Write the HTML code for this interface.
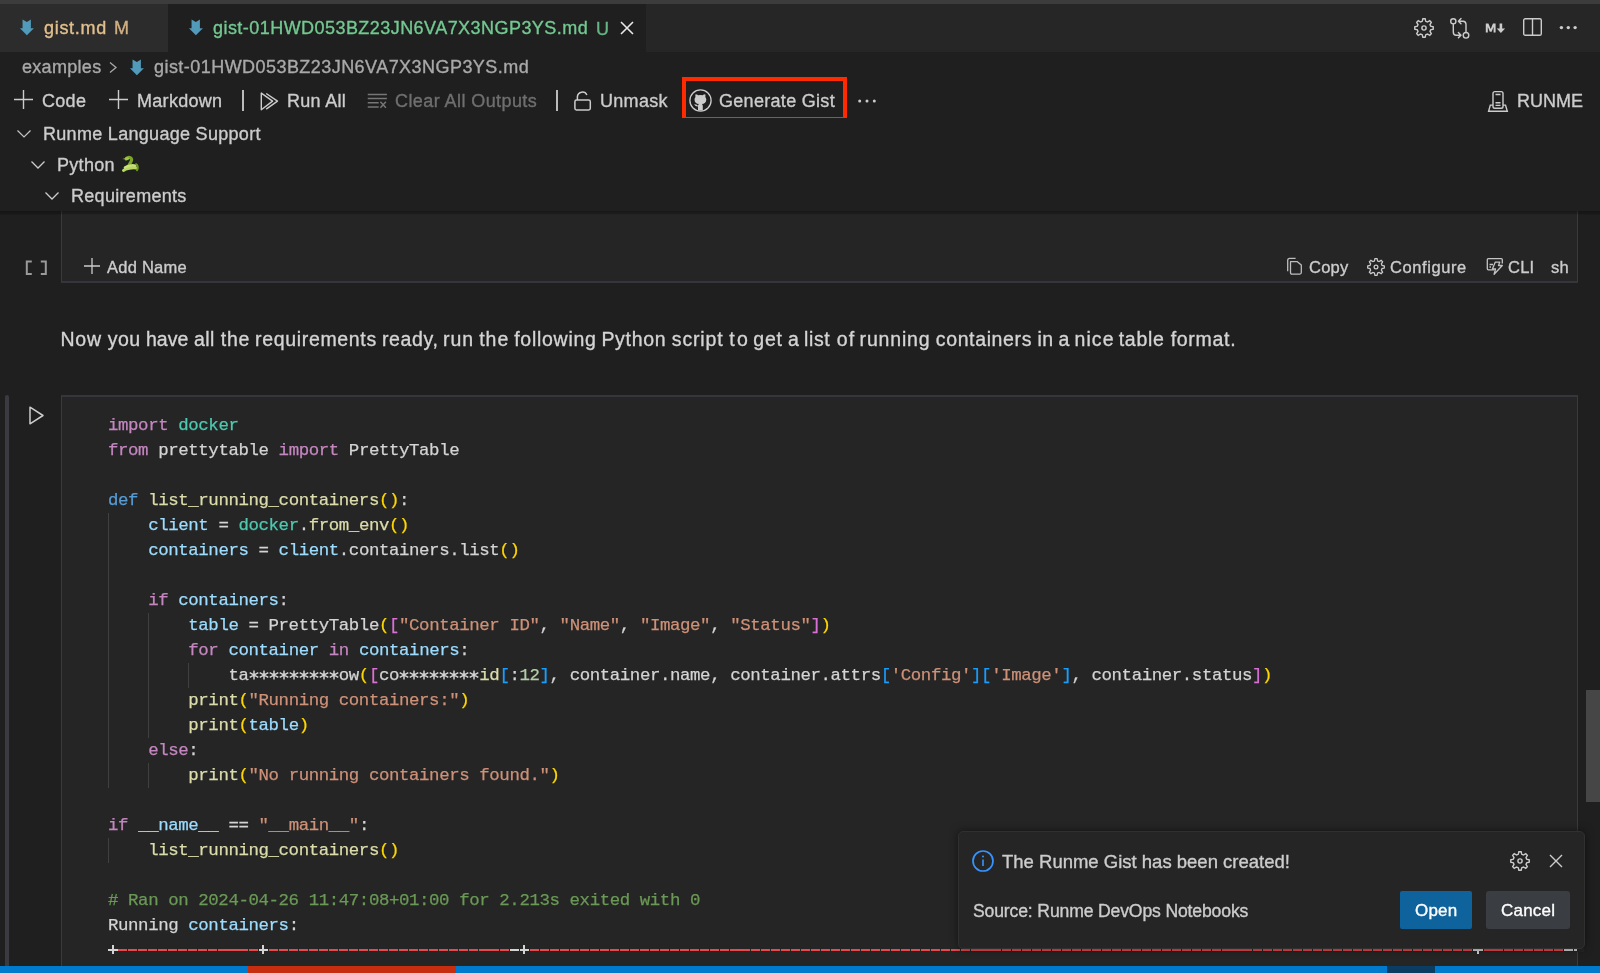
<!DOCTYPE html>
<html><head><meta charset="utf-8">
<style>
*{margin:0;padding:0;box-sizing:border-box}
html,body{width:1600px;height:973px;overflow:hidden;background:#1f1f1f;font-family:"Liberation Sans",sans-serif;color:#cccccc;position:relative;-webkit-text-stroke:0.35px currentColor}
.a{position:absolute;white-space:pre}
svg.a{overflow:visible}
.ui{font-size:18px;line-height:20px;letter-spacing:0.3px}
.code{font-family:"Liberation Mono",monospace;font-size:17.4px;letter-spacing:-0.402px;line-height:25px;color:#d4d4d4;-webkit-text-stroke:0.25px currentColor}
.kw{color:#c586c0}.def{color:#569cd6}.fn{color:#dcdcaa}.var{color:#9cdcfe}.str{color:#ce9178}
.mod{color:#4ec9b0}.num{color:#b5cea8}.cm{color:#6a9955}.b1{color:#ffd700}.b2{color:#da70d6}.b3{color:#179fff}.wt{color:#d4d4d4}
.red{color:#e04b4b}
.ast i{font-style:normal}
.guide{width:1px;background:#404040}
#wrap{position:absolute;left:0;top:0;width:1600px;height:973px;will-change:transform}
</style></head><body><div id="wrap">
<!-- title strip + tabs -->
<div class="a" style="left:0;top:0;width:1600px;height:4px;background:#3c3c3c"></div>
<div class="a" style="left:0;top:4px;width:1600px;height:48px;background:#262626"></div>
<div class="a" style="left:0;top:4px;width:168px;height:48px;background:#2c2c2c"></div>
<div class="a" style="left:168px;top:4px;width:478px;height:48px;background:#1f1f1f"></div>

<!-- md icon tab1 -->
<svg class="a" style="left:19px;top:18px" width="16" height="18" viewBox="0 0 16 18"><path d="M3.56 1.6L7.86 3.9 11.9 1.6V10.2H14.9L7.86 17.2 0.96 10.2H3.56Z" fill="#519aba"/></svg>
<div class="a ui" style="left:44px;top:18px;color:#e2c08d;letter-spacing:0.7px">gist.md</div>
<div class="a ui" style="left:114px;top:18px;color:#cfb084">M</div>

<svg class="a" style="left:187.7px;top:18px" width="16" height="18" viewBox="0 0 16 18"><path d="M3.56 1.6L7.86 3.9 11.9 1.6V10.2H14.9L7.86 17.2 0.96 10.2H3.56Z" fill="#519aba"/></svg>
<div class="a ui" style="left:213px;top:18px;color:#73c991;letter-spacing:0.45px">gist-01HWD053BZ23JN6VA7X3NGP3YS.md</div>
<div class="a ui" style="left:596px;top:18.5px;color:#66b585">U</div>
<svg class="a" style="left:620px;top:21px" width="14" height="14" viewBox="0 0 14 14"><path d="M1 1L13 13M13 1L1 13" stroke="#e8e8e8" stroke-width="1.6"/></svg>

<!-- right tab actions -->
<svg class="a" style="left:1414px;top:18px" width="20" height="20" viewBox="0 0 20 20"><g fill="none" stroke="#cccccc" stroke-width="1.4"><path d="M8.21 3.34 L8.87 0.77 L11.13 0.77 L11.79 3.34 L13.45 4.02 L15.73 2.67 L17.33 4.27 L15.98 6.55 L16.66 8.21 L19.23 8.87 L19.23 11.13 L16.66 11.79 L15.98 13.45 L17.33 15.73 L15.73 17.33 L13.45 15.98 L11.79 16.66 L11.13 19.23 L8.87 19.23 L8.21 16.66 L6.55 15.98 L4.27 17.33 L2.67 15.73 L4.02 13.45 L3.34 11.79 L0.77 11.13 L0.77 8.87 L3.34 8.21 L4.02 6.55 L2.67 4.27 L4.27 2.67 L6.55 4.02Z"/><circle cx="10" cy="10" r="2.1"/></g></svg>
<svg class="a" style="left:1449px;top:17px" width="22" height="23" viewBox="0 0 22 23"><g fill="none" stroke="#cccccc" stroke-width="1.4" stroke-linecap="round" stroke-linejoin="round"><circle cx="4.3" cy="4.3" r="2.6"/><circle cx="17" cy="18.3" r="2.8"/><path d="M4.3 6.9v8.1c0 2 1 3.2 3 3.2h3.8M9.4 15.6l2.6 2.6-2.6 2.6"/><path d="M17 15.5V7.4c0-2-1-3.2-3-3.2h-3.6M12 1.6L9.4 4.2l2.6 2.6"/></g></svg>
<svg class="a" style="left:1485px;top:23px" width="21" height="10" viewBox="0 0 21 10"><path d="M0.8 9.6V0.4h2.6l2.3 5.6 2.3-5.6h2.6v9.2H8.6V3.8L6.6 8.7H4.8L2.8 3.8v5.8z" fill="#cccccc"/><path d="M14.6 0.4h2.6v5h2.9l-4.2 4.6-4.2-4.6h2.9z" fill="#cccccc"/></svg>
<svg class="a" style="left:1523px;top:18px" width="19" height="18" viewBox="0 0 19 18"><g fill="none" stroke="#cccccc" stroke-width="1.4"><rect x="0.7" y="0.7" width="17.6" height="16.6" rx="1.6"/><path d="M9.5 0.7v16.6"/></g></svg>
<svg class="a" style="left:1559px;top:25px" width="19" height="5" viewBox="0 0 19 5"><g fill="#cccccc"><circle cx="2.4" cy="2.6" r="1.7"/><circle cx="9.3" cy="2.6" r="1.7"/><circle cx="16.1" cy="2.6" r="1.7"/></g></svg>

<!-- breadcrumbs -->
<div class="a" style="left:22px;top:57px;font-size:18px;line-height:20px;letter-spacing:0.3px;color:#a9a9a9">examples</div>
<svg class="a" style="left:109px;top:62px" width="8" height="11" viewBox="0 0 8 11"><path d="M1 0.5l6 5-6 5" fill="none" stroke="#a9a9a9" stroke-width="1.3"/></svg>
<svg class="a" style="left:129.1px;top:57.9px" width="16" height="18" viewBox="0 0 16 18"><path d="M3.56 1.6L7.86 3.9 11.9 1.6V10.2H14.9L7.86 17.2 0.96 10.2H3.56Z" fill="#519aba"/></svg>
<div class="a" style="left:154px;top:57px;font-size:18px;line-height:20px;letter-spacing:0.45px;color:#a9a9a9">gist-01HWD053BZ23JN6VA7X3NGP3YS.md</div>

<!-- notebook toolbar -->
<svg class="a" style="left:14px;top:90px" width="19" height="19" viewBox="0 0 19 19"><path d="M9.5 0v19M0 9.5h19" stroke="#cccccc" stroke-width="1.4"/></svg>
<div class="a ui" style="left:42px;top:91px">Code</div>
<svg class="a" style="left:109px;top:90px" width="19" height="19" viewBox="0 0 19 19"><path d="M9.5 0v19M0 9.5h19" stroke="#cccccc" stroke-width="1.4"/></svg>
<div class="a ui" style="left:137px;top:91px">Markdown</div>
<div class="a" style="left:242px;top:90px;width:1.5px;height:21px;background:#bbbbbb"></div>
<svg class="a" style="left:259px;top:91px" width="20" height="20" viewBox="0 0 20 20"><g fill="none" stroke="#cccccc" stroke-width="1.4" stroke-linejoin="round"><path d="M2.3 2.1V18.7L13.6 10.1Z"/><path d="M7.2 2.5L18.5 10.1 7.2 18.1"/></g></svg>
<div class="a ui" style="left:287px;top:91px">Run All</div>
<svg class="a" style="left:367px;top:93px" width="21" height="16" viewBox="0 0 21 16"><g fill="none" stroke="#767676" stroke-width="1.5"><path d="M0.75 1.4H19.9M0.75 5.4H19.9M0.75 9.65H11.7M0.75 14H11.7M13.4 8.8L18.9 14.65M18.9 8.8L13.4 14.65"/></g></svg>
<div class="a ui" style="left:395px;top:91px;color:#6f6f6f;letter-spacing:0.42px">Clear All Outputs</div>
<div class="a" style="left:556px;top:90px;width:1.5px;height:21px;background:#bbbbbb"></div>
<svg class="a" style="left:573px;top:90px" width="20" height="21" viewBox="0 0 20 21"><g fill="none" stroke="#cccccc" stroke-width="1.5"><rect x="1.9" y="10.1" width="15.4" height="9.8" rx="1.6"/><path d="M4.4 10.1V6.6A5 5 0 0 1 13.9 5.0"/></g></svg>
<div class="a ui" style="left:600px;top:91px">Unmask</div>
<div class="a" style="left:682.4px;top:77.2px;width:164.8px;height:43.6px;border:4.7px solid #ff2a00"></div>
<svg class="a" style="left:689px;top:89px" width="23" height="23" viewBox="0 0 23 23"><circle cx="11.5" cy="11.5" r="10.6" fill="none" stroke="#cccccc" stroke-width="1.3"/><path d="M9 21.5v-4c-2.5 0-3.3-1.5-3.8-2.3l2 .3c.7.3 1 1 1.8 1 .3-.9.5-1.2 1-1.5-2.7-.3-4.5-1.5-4.5-4.6 0-1 .3-1.8 1-2.5-.2-.6-.3-1.6.1-2.6 1 0 1.8.5 2.6 1a8 8 0 0 1 4.4 0c.8-.5 1.6-1 2.6-1 .4 1 .3 2 .1 2.6.7.7 1 1.5 1 2.5 0 3.1-1.8 4.3-4.5 4.6.6.4 1 1.2 1 2.3v4.2z" fill="#cccccc"/></svg>
<div class="a ui" style="left:719px;top:91px">Generate Gist</div>
<svg class="a" style="left:858px;top:99px" width="18" height="4" viewBox="0 0 18 4"><g fill="#cccccc"><circle cx="1.7" cy="2" r="1.5"/><circle cx="9" cy="2" r="1.5"/><circle cx="16.3" cy="2" r="1.5"/></g></svg>
<svg class="a" style="left:1488px;top:90px" width="20" height="22" viewBox="0 0 20 22"><g fill="none" stroke="#cccccc" stroke-width="1.4"><path d="M2.3 15.1H17.5L19.3 21.3H0.6Z"/><rect x="5" y="1.6" width="10" height="16.6" rx="1.8" fill="#1f1f1f"/><path d="M7.5 4.5H12.5M7.5 12.7H12.5M7.5 15.4H12.5"/></g></svg>
<div class="a ui" style="left:1517px;top:91px;letter-spacing:0px">RUNME</div>

<!-- cell 1 (partial) -->
<div class="a" style="left:61px;top:200px;width:1517px;height:83px;background:#252525;border:1px solid #3a3a40;border-bottom:2px solid #35353b;border-top:none"></div>
<svg class="a" style="left:0;top:0" width="60" height="300"><path d="M31.8 261.5H26.8V273.9H31.8M40.8 261.5H45.8V273.9H40.8" fill="none" stroke="#9a9a9a" stroke-width="2"/></svg>
<svg class="a" style="left:84px;top:258px" width="16" height="16" viewBox="0 0 16 16"><path d="M8 0v16M0 8h16" stroke="#cccccc" stroke-width="1.3"/></svg>
<div class="a" style="left:107px;top:257px;font-size:16.5px;line-height:20px;letter-spacing:0.25px">Add Name</div>
<svg class="a" style="left:1286px;top:257px" width="18" height="19" viewBox="0 0 18 19"><g fill="none" stroke="#bdbdbd" stroke-width="1.3" stroke-linejoin="round"><path d="M1.7 14.3V3.4Q1.7 1.4 3.7 1.4H9.6"/><path d="M4.5 4.65H11.3L15.3 8.1V15.6Q15.3 17.1 13.8 17.1H6Q4.5 17.1 4.5 15.6Z"/></g></svg>
<div class="a" style="left:1309px;top:257px;font-size:16.5px;line-height:20px;letter-spacing:0.25px">Copy</div>
<svg class="a" style="left:1367px;top:258px" width="18" height="18" viewBox="0 0 20 20"><g fill="none" stroke="#cccccc" stroke-width="1.4"><path d="M8.21 3.34 L8.87 0.77 L11.13 0.77 L11.79 3.34 L13.45 4.02 L15.73 2.67 L17.33 4.27 L15.98 6.55 L16.66 8.21 L19.23 8.87 L19.23 11.13 L16.66 11.79 L15.98 13.45 L17.33 15.73 L15.73 17.33 L13.45 15.98 L11.79 16.66 L11.13 19.23 L8.87 19.23 L8.21 16.66 L6.55 15.98 L4.27 17.33 L2.67 15.73 L4.02 13.45 L3.34 11.79 L0.77 11.13 L0.77 8.87 L3.34 8.21 L4.02 6.55 L2.67 4.27 L4.27 2.67 L6.55 4.02Z"/><circle cx="10" cy="10" r="2.1"/></g></svg>
<div class="a" style="left:1390px;top:257px;font-size:16.5px;line-height:20px;letter-spacing:0.58px">Configure</div>
<svg class="a" style="left:1486px;top:257px" width="18" height="19" viewBox="0 0 18 19"><g fill="none" stroke="#c4c4c4" stroke-width="1.3" stroke-linejoin="round"><path d="M8 12.8H2.3Q1.3 12.8 1.3 11.8V2.6Q1.3 1.6 2.3 1.6H15.3Q16.3 1.6 16.3 2.6V6.5"/><path d="M3.5 7.5H7M3.5 10H5"/><path d="M9.3 5.1H13.8L12.5 8.5H16.3L8.1 17.2 9.5 12H6.4Z"/></g></svg>
<div class="a" style="left:1508px;top:257px;font-size:16.5px;line-height:20px;letter-spacing:0.25px">CLI</div>
<div class="a" style="left:1551px;top:257px;font-size:16.5px;line-height:20px;letter-spacing:0.25px">sh</div>

<!-- markdown text -->
<div class="a" style="left:60.42px;top:328px;font-size:19.5px;line-height:22px;letter-spacing:0.860px;color:#d4d4d4">Now</div><div class="a" style="left:107.68px;top:328px;font-size:19.5px;line-height:22px;letter-spacing:0.460px;color:#d4d4d4">you</div><div class="a" style="left:145.96px;top:328px;font-size:19.5px;line-height:22px;letter-spacing:0.060px;color:#d4d4d4">have</div><div class="a" style="left:193.92px;top:328px;font-size:19.5px;line-height:22px;letter-spacing:0.460px;color:#d4d4d4">all</div><div class="a" style="left:220.72px;top:328px;font-size:19.5px;line-height:22px;letter-spacing:0.780px;color:#d4d4d4">the</div><div class="a" style="left:255.00px;top:328px;font-size:19.5px;line-height:22px;letter-spacing:0.671px;color:#d4d4d4">requirements</div><div class="a" style="left:381.92px;top:328px;font-size:19.5px;line-height:22px;letter-spacing:0.636px;color:#d4d4d4">ready,</div><div class="a" style="left:442.88px;top:328px;font-size:19.5px;line-height:22px;letter-spacing:1.020px;color:#d4d4d4">run</div><div class="a" style="left:479.14px;top:328px;font-size:19.5px;line-height:22px;letter-spacing:1.020px;color:#d4d4d4">the</div><div class="a" style="left:514.22px;top:328px;font-size:19.5px;line-height:22px;letter-spacing:0.720px;color:#d4d4d4">following</div><div class="a" style="left:601.42px;top:328px;font-size:19.5px;line-height:22px;letter-spacing:0.700px;color:#d4d4d4">Python</div><div class="a" style="left:671.80px;top:328px;font-size:19.5px;line-height:22px;letter-spacing:0.860px;color:#d4d4d4">script</div><div class="a" style="left:729.22px;top:328px;font-size:19.5px;line-height:22px;letter-spacing:2.300px;color:#d4d4d4">to</div><div class="a" style="left:753.30px;top:328px;font-size:19.5px;line-height:22px;letter-spacing:0.780px;color:#d4d4d4">get</div><div class="a" style="left:787.88px;top:328px;font-size:19.5px;line-height:22px;letter-spacing:0.540px;color:#d4d4d4">a</div><div class="a" style="left:804.04px;top:328px;font-size:19.5px;line-height:22px;letter-spacing:0.593px;color:#d4d4d4">list</div><div class="a" style="left:836.80px;top:328px;font-size:19.5px;line-height:22px;letter-spacing:1.020px;color:#d4d4d4">of</div><div class="a" style="left:859.58px;top:328px;font-size:19.5px;line-height:22px;letter-spacing:0.833px;color:#d4d4d4">running</div><div class="a" style="left:935.80px;top:328px;font-size:19.5px;line-height:22px;letter-spacing:0.629px;color:#d4d4d4">containers</div><div class="a" style="left:1037.46px;top:328px;font-size:19.5px;line-height:22px;letter-spacing:0.380px;color:#d4d4d4">in</div><div class="a" style="left:1058.42px;top:328px;font-size:19.5px;line-height:22px;letter-spacing:0.540px;color:#d4d4d4">a</div><div class="a" style="left:1074.54px;top:328px;font-size:19.5px;line-height:22px;letter-spacing:1.073px;color:#d4d4d4">nice</div><div class="a" style="left:1118.68px;top:328px;font-size:19.5px;line-height:22px;letter-spacing:0.740px;color:#d4d4d4">table</div><div class="a" style="left:1170.64px;top:328px;font-size:19.5px;line-height:22px;letter-spacing:0.727px;color:#d4d4d4">format.</div>

<!-- cell 2 -->
<div class="a" style="left:5px;top:395px;width:4px;height:580px;background:#3a3a40;border-radius:2px"></div>
<svg class="a" style="left:29px;top:406px" width="15" height="19" viewBox="0 0 15 19"><path d="M1 1.2v16.6L14 9.5z" fill="none" stroke="#cccccc" stroke-width="1.5" stroke-linejoin="round"/></svg>
<div class="a" style="left:61px;top:395px;width:1517px;height:600px;background:#252525;border:1px solid #3a3a40;border-top:2px solid #35353b"></div>
<div class="a guide" style="left:108px;top:513px;height:275px"></div><div class="a guide" style="left:148px;top:613px;height:125px"></div><div class="a guide" style="left:188px;top:663px;height:25px"></div><div class="a guide" style="left:148px;top:763px;height:25px"></div><div class="a guide" style="left:108px;top:838px;height:25px"></div>
<div class="a code" style="left:108px;top:413px"><span class="kw">import</span> <span class="mod">docker</span></div>
<div class="a code" style="left:108px;top:438px"><span class="kw">from</span> prettytable <span class="kw">import</span> PrettyTable</div>
<div class="a code" style="left:108px;top:488px"><span class="def">def</span> <span class="fn">list_running_containers</span><span class="b1">()</span>:</div>
<div class="a code" style="left:108px;top:513px">    <span class="var">client</span> = <span class="mod">docker</span>.<span class="fn">from_env</span><span class="b1">()</span></div>
<div class="a code" style="left:108px;top:538px">    <span class="var">containers</span> = <span class="var">client</span>.containers.list<span class="b1">()</span></div>
<div class="a code" style="left:108px;top:588px">    <span class="kw">if</span> <span class="var">containers</span>:</div>
<div class="a code" style="left:108px;top:613px">        <span class="var">table</span> = PrettyTable<span class="b1">(</span><span class="b2">[</span><span class="str">&quot;Container ID&quot;</span>, <span class="str">&quot;Name&quot;</span>, <span class="str">&quot;Image&quot;</span>, <span class="str">&quot;Status&quot;</span><span class="b2">]</span><span class="b1">)</span></div>
<div class="a code" style="left:108px;top:638px">        <span class="kw">for</span> <span class="var">container</span> <span class="kw">in</span> <span class="var">containers</span>:</div>
<div class="a code" style="left:108px;top:663px">            ta         ow<span class="b1">(</span><span class="b2">[</span>co        <span class="fn">id</span><span class="b3">[</span>:<span class="num">12</span><span class="b3">]</span>, container.name, container.attrs<span class="b3">[</span><span class="str">&#x27;Config&#x27;</span><span class="b3">]</span><span class="b3">[</span><span class="str">&#x27;Image&#x27;</span><span class="b3">]</span>, container.status<span class="b2">]</span><span class="b1">)</span></div>
<div class="a code" style="left:108px;top:688px">        <span class="fn">print</span><span class="b1">(</span><span class="str">&quot;Running containers:&quot;</span><span class="b1">)</span></div>
<div class="a code" style="left:108px;top:713px">        <span class="fn">print</span><span class="b1">(</span><span class="var">table</span><span class="b1">)</span></div>
<div class="a code" style="left:108px;top:738px">    <span class="kw">else</span>:</div>
<div class="a code" style="left:108px;top:763px">        <span class="fn">print</span><span class="b1">(</span><span class="str">&quot;No running containers found.&quot;</span><span class="b1">)</span></div>
<div class="a code" style="left:108px;top:813px"><span class="kw">if</span> <span class="var">__name__</span> == <span class="str">&quot;__main__&quot;</span>:</div>
<div class="a code" style="left:108px;top:838px">    <span class="fn">list_running_containers</span><span class="b1">()</span></div>
<div class="a code" style="left:108px;top:888px"><span class="cm"># Ran on 2024-04-26 11:47:08+01:00 for 2.213s exited with 0</span></div>
<div class="a code" style="left:108px;top:913px">Running <span class="var">containers</span>:</div>
<div class="a" style="left:118px;top:949px;width:1459px;height:2px;background:repeating-linear-gradient(90deg,#e9484c 0,#e9484c 9.1px,transparent 9.1px,transparent 10.04px)"></div><div class="a" style="left:107.50px;top:948px;width:10.60px;height:4px;background:#252525"></div><div class="a" style="left:108.00px;top:949px;width:9.50px;height:2px;background:#d4d4d4"></div><div class="a" style="left:111.75px;top:945px;width:2px;height:9px;background:#d4d4d4"></div><div class="a" style="left:258.10px;top:948px;width:10.60px;height:4px;background:#252525"></div><div class="a" style="left:258.60px;top:949px;width:9.50px;height:2px;background:#d4d4d4"></div><div class="a" style="left:262.35px;top:945px;width:2px;height:9px;background:#d4d4d4"></div><div class="a" style="left:519.14px;top:948px;width:10.60px;height:4px;background:#252525"></div><div class="a" style="left:519.64px;top:949px;width:9.50px;height:2px;background:#d4d4d4"></div><div class="a" style="left:523.39px;top:945px;width:2px;height:9px;background:#d4d4d4"></div><div class="a" style="left:1472.94px;top:948px;width:10.60px;height:4px;background:#252525"></div><div class="a" style="left:1473.44px;top:949px;width:9.50px;height:2px;background:#d4d4d4"></div><div class="a" style="left:1477.19px;top:945px;width:2px;height:9px;background:#d4d4d4"></div><div class="a" style="left:1573.34px;top:948px;width:10.60px;height:4px;background:#252525"></div><div class="a" style="left:1573.84px;top:949px;width:3.16px;height:2px;background:#d4d4d4"></div><div class="a" style="left:509.60px;top:949px;width:9.1px;height:2px;background:#d4d4d4"></div><div class="a" style="left:1563.80px;top:949px;width:9.1px;height:2px;background:#d4d4d4"></div>
<svg class="a" style="left:248.58px;top:670.30px" width="10" height="10" viewBox="-5 -5 10 10"><path d="M0-4.6V4.6M-4.3-2.4L4.3 2.4M-4.3 2.4L4.3-2.4" stroke="#d4d4d4" stroke-width="1.5"/></svg><svg class="a" style="left:258.62px;top:670.30px" width="10" height="10" viewBox="-5 -5 10 10"><path d="M0-4.6V4.6M-4.3-2.4L4.3 2.4M-4.3 2.4L4.3-2.4" stroke="#d4d4d4" stroke-width="1.5"/></svg><svg class="a" style="left:268.66px;top:670.30px" width="10" height="10" viewBox="-5 -5 10 10"><path d="M0-4.6V4.6M-4.3-2.4L4.3 2.4M-4.3 2.4L4.3-2.4" stroke="#d4d4d4" stroke-width="1.5"/></svg><svg class="a" style="left:278.70px;top:670.30px" width="10" height="10" viewBox="-5 -5 10 10"><path d="M0-4.6V4.6M-4.3-2.4L4.3 2.4M-4.3 2.4L4.3-2.4" stroke="#d4d4d4" stroke-width="1.5"/></svg><svg class="a" style="left:288.74px;top:670.30px" width="10" height="10" viewBox="-5 -5 10 10"><path d="M0-4.6V4.6M-4.3-2.4L4.3 2.4M-4.3 2.4L4.3-2.4" stroke="#d4d4d4" stroke-width="1.5"/></svg><svg class="a" style="left:298.78px;top:670.30px" width="10" height="10" viewBox="-5 -5 10 10"><path d="M0-4.6V4.6M-4.3-2.4L4.3 2.4M-4.3 2.4L4.3-2.4" stroke="#d4d4d4" stroke-width="1.5"/></svg><svg class="a" style="left:308.82px;top:670.30px" width="10" height="10" viewBox="-5 -5 10 10"><path d="M0-4.6V4.6M-4.3-2.4L4.3 2.4M-4.3 2.4L4.3-2.4" stroke="#d4d4d4" stroke-width="1.5"/></svg><svg class="a" style="left:318.86px;top:670.30px" width="10" height="10" viewBox="-5 -5 10 10"><path d="M0-4.6V4.6M-4.3-2.4L4.3 2.4M-4.3 2.4L4.3-2.4" stroke="#d4d4d4" stroke-width="1.5"/></svg><svg class="a" style="left:328.90px;top:670.30px" width="10" height="10" viewBox="-5 -5 10 10"><path d="M0-4.6V4.6M-4.3-2.4L4.3 2.4M-4.3 2.4L4.3-2.4" stroke="#d4d4d4" stroke-width="1.5"/></svg><svg class="a" style="left:399.18px;top:670.30px" width="10" height="10" viewBox="-5 -5 10 10"><path d="M0-4.6V4.6M-4.3-2.4L4.3 2.4M-4.3 2.4L4.3-2.4" stroke="#d4d4d4" stroke-width="1.5"/></svg><svg class="a" style="left:409.22px;top:670.30px" width="10" height="10" viewBox="-5 -5 10 10"><path d="M0-4.6V4.6M-4.3-2.4L4.3 2.4M-4.3 2.4L4.3-2.4" stroke="#d4d4d4" stroke-width="1.5"/></svg><svg class="a" style="left:419.26px;top:670.30px" width="10" height="10" viewBox="-5 -5 10 10"><path d="M0-4.6V4.6M-4.3-2.4L4.3 2.4M-4.3 2.4L4.3-2.4" stroke="#d4d4d4" stroke-width="1.5"/></svg><svg class="a" style="left:429.30px;top:670.30px" width="10" height="10" viewBox="-5 -5 10 10"><path d="M0-4.6V4.6M-4.3-2.4L4.3 2.4M-4.3 2.4L4.3-2.4" stroke="#d4d4d4" stroke-width="1.5"/></svg><svg class="a" style="left:439.34px;top:670.30px" width="10" height="10" viewBox="-5 -5 10 10"><path d="M0-4.6V4.6M-4.3-2.4L4.3 2.4M-4.3 2.4L4.3-2.4" stroke="#d4d4d4" stroke-width="1.5"/></svg><svg class="a" style="left:449.38px;top:670.30px" width="10" height="10" viewBox="-5 -5 10 10"><path d="M0-4.6V4.6M-4.3-2.4L4.3 2.4M-4.3 2.4L4.3-2.4" stroke="#d4d4d4" stroke-width="1.5"/></svg><svg class="a" style="left:459.42px;top:670.30px" width="10" height="10" viewBox="-5 -5 10 10"><path d="M0-4.6V4.6M-4.3-2.4L4.3 2.4M-4.3 2.4L4.3-2.4" stroke="#d4d4d4" stroke-width="1.5"/></svg><svg class="a" style="left:469.46px;top:670.30px" width="10" height="10" viewBox="-5 -5 10 10"><path d="M0-4.6V4.6M-4.3-2.4L4.3 2.4M-4.3 2.4L4.3-2.4" stroke="#d4d4d4" stroke-width="1.5"/></svg>

<!-- sticky outline -->
<div class="a" style="left:0;top:52px;width:1600px;height:0"></div>
<div class="a" style="left:0;top:118px;width:1600px;height:93px;background:#1f1f1f"></div>
<div class="a" style="left:0;top:211px;width:1600px;height:4px;background:linear-gradient(rgba(0,0,0,0.32),rgba(0,0,0,0.22) 60%,rgba(0,0,0,0))"></div>
<svg class="a" style="left:17px;top:130px" width="14" height="8" viewBox="0 0 14 8"><path d="M0.5 0.5l6.5 6.5 6.5-6.5" fill="none" stroke="#c4c4c4" stroke-width="1.2"/></svg>
<div class="a ui" style="left:43px;top:124px">Runme Language Support</div>
<svg class="a" style="left:31px;top:161px" width="14" height="8" viewBox="0 0 14 8"><path d="M0.5 0.5l6.5 6.5 6.5-6.5" fill="none" stroke="#cccccc" stroke-width="1.3"/></svg>
<div class="a ui" style="left:57px;top:155px">Python</div>
<svg class="a" style="left:122px;top:156px" width="19" height="18" viewBox="0 0 19 18"><path d="M3 2.6l-2.2.3" stroke="#b06060" stroke-width="0.8"/><path d="M4 3c1-1.6 3.2-2 4.6-1.2 1.4.8 1.2 2.6.2 4.2L6 11" fill="none" stroke="#7aa52a" stroke-width="3.2" stroke-linecap="round"/><ellipse cx="5" cy="2.6" rx="2.2" ry="1.6" fill="#9cc640"/><path d="M1.5 14.5c2-2.2 9-3.2 13-2.5" fill="none" stroke="#b8d860" stroke-width="3" stroke-linecap="round"/><path d="M3 11.5c2.5-1.8 7.5-2.5 10-1.8" fill="none" stroke="#c8e378" stroke-width="2.6" stroke-linecap="round"/><path d="M14 8.2c2 1 2.3 3.8 1 6" fill="none" stroke="#6e9a22" stroke-width="2" stroke-linecap="round"/></svg>
<svg class="a" style="left:45px;top:192px" width="14" height="8" viewBox="0 0 14 8"><path d="M0.5 0.5l6.5 6.5 6.5-6.5" fill="none" stroke="#cccccc" stroke-width="1.3"/></svg>
<div class="a ui" style="left:71px;top:185.5px">Requirements</div>

<!-- scrollbar -->
<div class="a" style="left:1586px;top:690px;width:14px;height:112px;background:#464646"></div>

<!-- notification -->
<div class="a" style="left:958px;top:831px;width:627px;height:118px;background:#252526;border:1px solid #303030;border-radius:5px;box-shadow:0 0 8px rgba(0,0,0,0.5)"></div>
<svg class="a" style="left:972px;top:850px" width="22" height="22" viewBox="0 0 22 22"><circle cx="11" cy="11" r="10" fill="none" stroke="#3794ff" stroke-width="1.7"/><path d="M11 9.5v6.5" stroke="#3794ff" stroke-width="1.6"/><circle cx="11" cy="6.5" r="1" fill="#3794ff"/></svg>
<div class="a" style="left:1002px;top:852px;font-size:18.5px;line-height:20px;letter-spacing:0px">The Runme Gist has been created!</div>
<svg class="a" style="left:1510px;top:851px" width="20" height="20" viewBox="0 0 20 20"><g fill="none" stroke="#cccccc" stroke-width="1.4"><path d="M8.21 3.34 L8.87 0.77 L11.13 0.77 L11.79 3.34 L13.45 4.02 L15.73 2.67 L17.33 4.27 L15.98 6.55 L16.66 8.21 L19.23 8.87 L19.23 11.13 L16.66 11.79 L15.98 13.45 L17.33 15.73 L15.73 17.33 L13.45 15.98 L11.79 16.66 L11.13 19.23 L8.87 19.23 L8.21 16.66 L6.55 15.98 L4.27 17.33 L2.67 15.73 L4.02 13.45 L3.34 11.79 L0.77 11.13 L0.77 8.87 L3.34 8.21 L4.02 6.55 L2.67 4.27 L4.27 2.67 L6.55 4.02Z"/><circle cx="10" cy="10" r="2.1"/></g></svg>
<svg class="a" style="left:1549px;top:854px" width="14" height="14" viewBox="0 0 14 14"><path d="M1 1L13 13M13 1L1 13" stroke="#cccccc" stroke-width="1.4"/></svg>
<div class="a" style="left:973px;top:900.5px;font-size:17.6px;line-height:20px;letter-spacing:-0.15px">Source: Runme DevOps Notebooks</div>
<div class="a" style="left:1400px;top:891px;width:72px;height:38px;background:#0e639c;border-radius:2px"></div>
<div class="a" style="left:1415px;top:901px;font-size:17px;line-height:20px;letter-spacing:0.2px;color:#ffffff">Open</div>
<div class="a" style="left:1486px;top:891px;width:84px;height:38px;background:#3a3d41;border-radius:3px"></div>
<div class="a" style="left:1501px;top:901px;font-size:17px;line-height:20px;letter-spacing:0.2px;color:#ffffff">Cancel</div>

<!-- status bar -->
<div class="a" style="left:0;top:966px;width:1600px;height:7px;background:#007acc"></div>
<div class="a" style="left:248px;top:966px;width:208px;height:7px;background:#c72e0f"></div>
<div class="a" style="left:1387px;top:966px;width:48px;height:7px;background:#0b3d63"></div>
</div></body></html>
